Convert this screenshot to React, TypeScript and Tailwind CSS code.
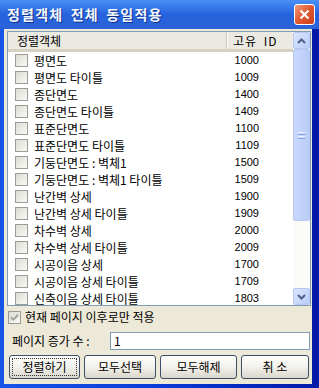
import React from 'react';

const KR = '"Noto Sans CJK KR", "Liberation Sans", sans-serif';

const rows: [string, string][] = [
  ['평면도', '1000'],
  ['평면도 타이틀', '1009'],
  ['종단면도', '1400'],
  ['종단면도 타이틀', '1409'],
  ['표준단면도', '1100'],
  ['표준단면도 타이틀', '1109'],
  ['기둥단면도 : 벽체1', '1500'],
  ['기둥단면도 : 벽체1 타이틀', '1509'],
  ['난간벽 상세', '1900'],
  ['난간벽 상세 타이틀', '1909'],
  ['차수벽 상세', '2000'],
  ['차수벽 상세 타이틀', '2009'],
  ['시공이음 상세', '1700'],
  ['시공이음 상세 타이틀', '1709'],
  ['신축이음 상세 타이틀', '1803'],
];

function Check({ checked = false }: { checked?: boolean }) {
  return (
    <div className="w-[13px] h-[13px] shrink-0 border border-[#9C9B94] bg-gradient-to-br from-[#DCDBD3] to-[#FAFAF7] flex items-center justify-center">
      {checked && (
        <svg width="9" height="9" viewBox="0 0 9 9">
          <path d="M1 4.2 L3.4 6.6 L8 1.8" fill="none" stroke="#A3A29C" strokeWidth="2" />
        </svg>
      )}
    </div>
  );
}

function Arrow({ up }: { up: boolean }) {
  return (
    <div className="h-[17px] shrink-0 rounded-[2px] border border-[#B6C8F2] bg-gradient-to-br from-[#DCE6FD] to-[#B9CDF8] flex items-center justify-center">
      <svg width="9" height="6" viewBox="0 0 9 6">
        <path d={up ? 'M1 5 L4.5 1.5 L8 5' : 'M1 1 L4.5 4.5 L8 1'} fill="none" stroke="#4D6185" strokeWidth="2" />
      </svg>
    </div>
  );
}

function Btn({ label, w, focus = false }: { label: string; w: string; focus?: boolean }) {
  return (
    <div className={`${w} h-[24px] shrink-0 rounded-[3px] border border-[#3E4E66] bg-gradient-to-b from-[#FEFEFD] via-[#F2F1EB] to-[#D9D6CB] flex items-center justify-center p-[2px]`}>
      <div className={`w-full h-full flex items-center justify-center text-[12px] text-black ${focus ? 'border border-dotted border-[#333]' : ''}`}>
        {label}
      </div>
    </div>
  );
}

export default function App() {
  return (
    <div className="w-[319px] h-[388px] flex flex-col bg-[#0A3BD6] overflow-hidden" style={{ fontFamily: KR }}>
      <div className="h-[29px] shrink-0 flex items-center pl-[7px] pr-[4px] bg-gradient-to-b from-[#4A90F5] via-[#2562DD] to-[#2B63D8]">
        <span className="flex-1 text-[#F4F8FF] font-bold text-[14px] tracking-[1.2px] [word-spacing:3px] [text-shadow:1px_1px_0_#12308A]">
          정렬객체 전체 동일적용
        </span>
        <div className="w-[21px] h-[21px] rounded-[3px] border border-white bg-gradient-to-br from-[#F09A7A] via-[#E0572E] to-[#C9401C] flex items-center justify-center">
          <svg width="11" height="11" viewBox="0 0 11 11">
            <path d="M1.5 1.5 L9.5 9.5 M9.5 1.5 L1.5 9.5" stroke="white" strokeWidth="2.2" />
          </svg>
        </div>
      </div>

      <div className="flex-1 flex pl-[4px] pr-[7px] pb-[4px] bg-gradient-to-r from-[#1655E8] via-[#0A3BD6] to-[#0019A8]">
        <div className="flex-1 bg-[#ECE9D8] flex flex-col pt-[2px]">
          <div className="ml-[3px] w-[304px] h-[275px] border border-[#7F9DB9] bg-white flex overflow-hidden">
            <div className="flex-1 flex flex-col overflow-hidden">
              <div className="h-[20px] shrink-0 flex bg-[#EBEAE2] border-b-[3px] border-[#D6D2C2] text-[12px] text-black">
                <div className="w-[219px] pl-[9px] flex items-center border-r border-[#C7C5B8]">정렬객체</div>
                <div className="flex-1 pl-[5px] flex items-center border-l border-white tracking-[1px] [word-spacing:3px]">고유 ID</div>
              </div>
              {rows.map(([name, id]) => (
                <div key={id} className="h-[17px] shrink-0 flex items-center text-[12px] text-black">
                  <div className="pl-[7px] pr-[6px]">
                    <Check />
                  </div>
                  <div className="flex-1 whitespace-nowrap leading-none">{name}</div>
                  <div className="w-[60px] pr-[34px] text-right text-[11px] leading-none" style={{ fontFamily: '"Liberation Sans", sans-serif' }}>
                    {id}
                  </div>
                </div>
              ))}
            </div>
            <div className="w-[17px] shrink-0 flex flex-col bg-[#FBFBF7]">
              <Arrow up />
              <div className="h-[172px] shrink-0 rounded-[2px] border border-[#B6C8F2] bg-gradient-to-r from-[#C9D8FC] to-[#BACDF7] flex items-center justify-center">
                <div className="flex flex-col gap-[1px]">
                  <div className="w-[7px] h-[1px] bg-[#EEF3FE]" />
                  <div className="w-[7px] h-[1px] bg-[#8CA7E4]" />
                  <div className="w-[7px] h-[1px] bg-[#EEF3FE]" />
                  <div className="w-[7px] h-[1px] bg-[#8CA7E4]" />
                </div>
              </div>
              <div className="flex-1" />
              <Arrow up={false} />
            </div>
          </div>

          <div className="h-[22px] flex items-center pl-[4px] gap-[4px] text-[12px] text-black">
            <Check checked />
            <span>현재 페이지 이후로만 적용</span>
          </div>

          <div className="h-[18px] mt-[4px] flex items-center text-[12px] text-black">
            <span className="w-[106px] pl-[8px]">페이지 증가 수 :</span>
            <div className="w-[200px] h-[18px] border border-[#7F9DB9] bg-white flex items-center pl-[3px] text-[12px]">
              1
            </div>
          </div>

          <div className="mt-[5px] flex pl-[5px] gap-[4px]">
            <Btn label="정렬하기" w="w-[71px]" focus />
            <Btn label="모두선택" w="w-[72px]" />
            <Btn label="모두해제" w="w-[77px]" />
            <Btn label="취 소" w="w-[68px]" />
          </div>
        </div>
      </div>
    </div>
  );
}
